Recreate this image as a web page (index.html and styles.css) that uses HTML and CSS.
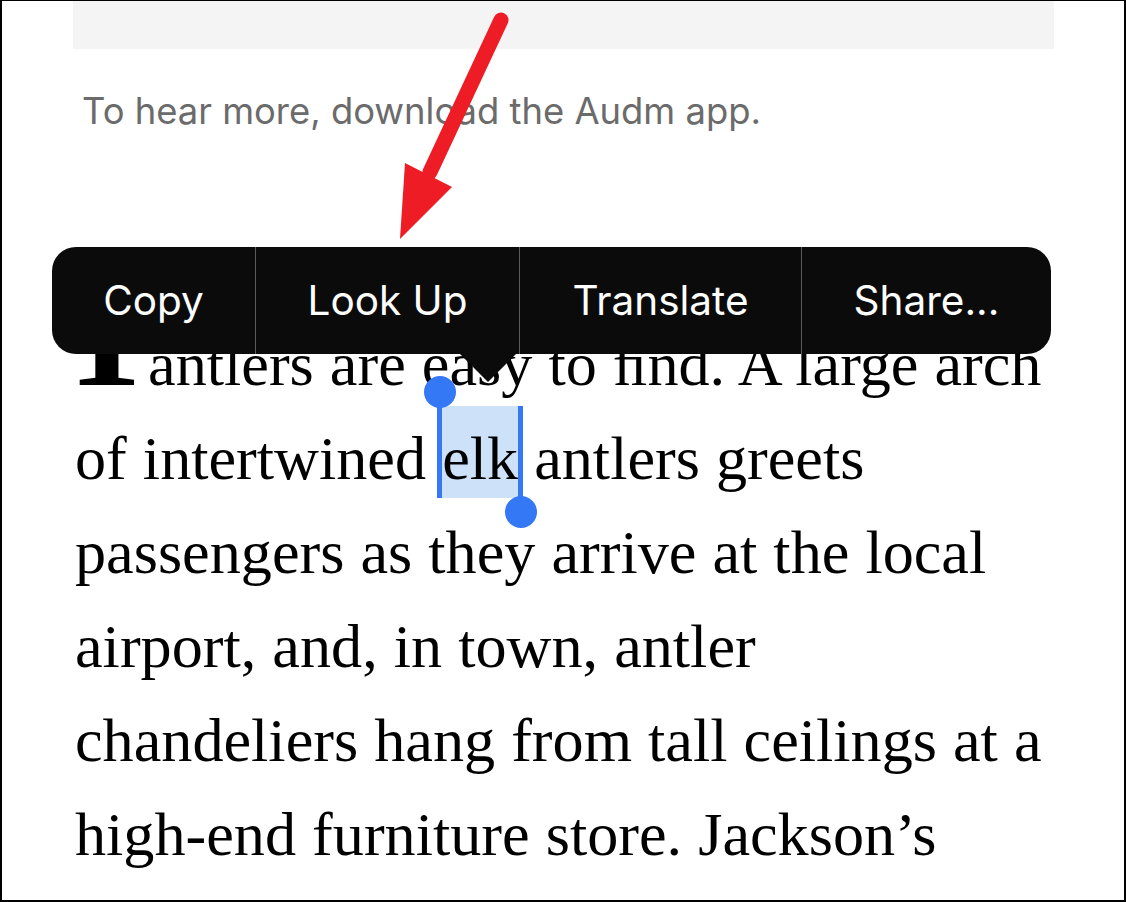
FILE: index.html
```html
<!DOCTYPE html>
<html lang="en">
<head>
    <meta charset="UTF-8">
    <meta name="viewport" content="width=device-width, initial-scale=1.0">
    <title>Look Up</title>
    <link rel="stylesheet" href="styles.css">
</head>
<body>

<div class="frame">
    <!-- audio player strip -->
    <div class="audio-box"></div>

    <p class="caption">To hear more, download the Audm app.</p>

    <!-- Article -->
    <p class="article"><span class="initial">T</span>antlers are easy to ﬁnd. A large arch<br>of intertwined <span class="sel"><span class="handle start"></span>elk<span class="handle end"></span></span> antlers greets<br>passengers as they arrive at the local<br>airport, and, in town, antler<br>chandeliers hang from tall ceilings at a<br>high-end furniture store. Jackson’s</p>

    <!-- Edit menu -->
    <div class="menu">
        <div class="menu-item">Copy</div>
        <div class="menu-item">Look Up</div>
        <div class="menu-item">Translate</div>
        <div class="menu-item">Share...</div>
    </div>

    <!-- annotation arrow -->
    <svg class="arrow" width="1126" height="902" viewBox="0 0 1126 902">
        <line x1="501" y1="20" x2="430" y2="172" stroke="#ee1c25" stroke-width="15" stroke-linecap="round"/>
        <polygon points="405,163 452,187 400,239" fill="#ee1c25"/>
    </svg>
</div>

</body>
</html>
```

FILE: styles.css
```css
body {
    margin: 0;
    background: #fff;
}

.frame {
    position: relative;
    width: 1126px;
    height: 902px;
    box-sizing: border-box;
    border-style: solid;
    border-color: #000;
    border-width: 1px 2px 2px 2px;
    overflow: hidden;
}

.audio-box {
    margin-left: 71px;
    width: 981px;
    height: 48px;
    background-color: #f4f4f4;
}

.caption {
    margin: 40px 0 0 0;
    padding-left: 80px;
    font-family: Inter, "Noto Sans", sans-serif;
    font-size: 36.4px;
    line-height: 44px;
    color: #6b6b6b;
}

.article {
    margin: 184px 0 0 0;
    padding-left: 73px;
    font-family: "Liberation Serif", serif;
    font-size: 62.2px;
    line-height: 94px;
    word-spacing: 0.5px;
    color: #000;
    white-space: nowrap;
}

.initial {
    font-weight: bold;
    font-size: 150px;
    line-height: 0;
    margin-left: -18px;
    margin-right: -9px;
}

.sel {
    position: relative;
    background-color: #cde1f9;
    padding-top: 18px;
    padding-bottom: 6px;
}

.handle {
    position: absolute;
    top: 0;
    bottom: 0;
    width: 5px;
    background-color: #3478f6;
}

.handle::after {
    content: "";
    position: absolute;
    left: -13px;
    width: 32px;
    height: 32px;
    border-radius: 50%;
    background-color: #3478f6;
}

.handle.start {
    left: -5px;
}

.handle.start::after {
    top: -30px;
}

.handle.end {
    right: -5px;
}

.handle.end::after {
    bottom: -30px;
}

.menu {
    position: absolute;
    left: 50px;
    top: 246px;
    width: 999px;
    height: 107px;
    display: grid;
    grid-template-columns: 203px 264px 282px 1fr;
    background-color: #0b0b0b;
    border-radius: 24px;
    font-family: Inter, "Noto Sans", sans-serif;
    font-size: 40.5px;
    color: #fff;
}

.menu::after {
    content: "";
    position: absolute;
    left: 408px;
    top: 100%;
    border-top: 28px solid #0b0b0b;
    border-left: 28px solid transparent;
    border-right: 28px solid transparent;
}

.menu-item {
    display: flex;
    align-items: center;
    justify-content: center;
}

.menu-item + .menu-item {
    border-left: 1px solid #5c5c5c;
}

.arrow {
    position: absolute;
    left: -2px;
    top: -1px;
    pointer-events: none;
}
```
